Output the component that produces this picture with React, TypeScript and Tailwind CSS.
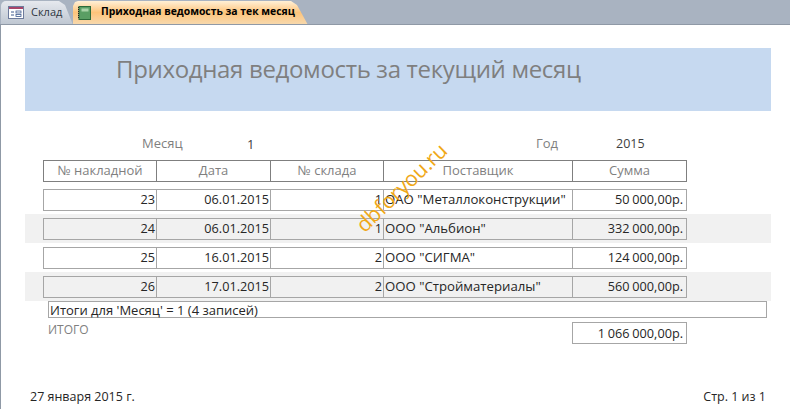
const font = { fontFamily: '"Open Sans", "Noto Sans", sans-serif' };

const cols = ["w-[112px]", "w-[114px]", "w-[113px]", "w-[189px]", "w-[114px]"];
const rows = [
  ["23", "06.01.2015", "1", 'ОАО "Металлоконструкции"', "50 000,00р."],
  ["24", "06.01.2015", "1", 'ООО "Альбион"', "332 000,00р."],
  ["25", "16.01.2015", "2", 'ООО "СИГМА"', "124 000,00р."],
  ["26", "17.01.2015", "2", 'ООО "Стройматериалы"', "560 000,00р."],
];
const head = ["№ накладной", "Дата", "№ склада", "Поставщик", "Сумма"];

function Row({ cells, band }: { cells: string[]; band: boolean }) {
  return (
    <div className={`h-[29px] pl-[18px] flex items-center w-[746px] ${band ? "bg-[#f1f1f1]" : ""}`}>
      <div className="flex h-[22px] w-[644px] border border-[#a6a6a6]">
        {cells.map((c, i) => (
          <div
            key={i}
            className={`${cols[i]} shrink-0 h-full flex items-center leading-none whitespace-nowrap text-[#262626] ${
              i > 0 ? "border-l border-[#a6a6a6]" : ""
            } ${i === 3 ? "justify-start pl-px text-[13.2px]" : "justify-end text-[12.7px]"} ${i === 4 ? "pr-[3px] [word-spacing:-0.5px]" : i === 3 ? "" : "pr-px"}`}
          >
            {c}
          </div>
        ))}
      </div>
    </div>
  );
}

export default function App() {
  return (
    <div className="w-[790px] h-[409px] overflow-hidden bg-white relative" style={font}>
      {/* tab strip */}
      <div className="h-[25px] bg-[#a9b3c1] flex items-end border-b border-[#8f99a6] pl-px">
        <div className="w-[72px] h-[23px] rounded-tl-[5px] [clip-path:polygon(0_0,58px_0,64px_4px,72px_24px,0_24px)] bg-gradient-to-b from-[#e6e9ee] to-[#bfc7d2] flex items-center pl-[7px] gap-[7px]">
          <svg width="16" height="13" viewBox="0 0 16 13" className="shrink-0">
            <rect x="0.5" y="0.5" width="15" height="12" fill="#fff" stroke="#6d7b9c" />
            <rect x="1" y="1" width="14" height="2" fill="#a8456a" />
            <path d="M3 6h3M3 9h3" stroke="#3f5b8f" />
            <rect x="8" y="5" width="5" height="2" fill="#fff" stroke="#3f5b8f" strokeWidth="0.8" />
            <rect x="8" y="8.5" width="5" height="2" fill="#fff" stroke="#3f5b8f" strokeWidth="0.8" />
          </svg>
          <span className="text-[11px] leading-none text-[#2d3640] pb-[2px]">Склад</span>
        </div>
        <div className="w-[235px] h-[23px] [clip-path:polygon(0_5px,2px_1px,5px_0,218px_0,224px_4px,235px_24px,0_24px)] bg-gradient-to-b from-[#fff0d6] via-[#fdc47a] to-[#f7d8ac] flex items-center pl-[5px] gap-[10px]">
          <svg width="13" height="14" viewBox="0 0 13 14" className="shrink-0">
            <rect x="1" y="0.5" width="11.5" height="13" fill="#5a9e64" stroke="#2d6b3a" />
            <rect x="3.5" y="2.5" width="7" height="3" fill="#a9d3a8" />
            <path d="M0.5 1v12" stroke="#222" strokeDasharray="1 1" />
          </svg>
          <span className="text-[10.4px] leading-none font-bold text-black whitespace-nowrap pb-[2px]">Приходная ведомость за тек месяц</span>
        </div>
      </div>

      {/* page */}
      <div className="h-[384px] border-l border-[#8f99a6] pl-[24px] relative">
        <div className="pt-[23px]">
          <div className="h-[63px] w-[746px] bg-[#c6d9f0] pl-[91px] pt-[2px]">
            <span className="text-[24px] tracking-[-0.33px] leading-[38px] text-[#7f7f7f] whitespace-nowrap">Приходная ведомость за текущий месяц</span>
          </div>
        </div>

        <div className="h-[49px] w-[746px] relative flex items-end pb-[8px] text-[13px] leading-[18px]">
          <span className="ml-[117px] w-[105px] text-[#7f7f7f]">Месяц</span>
          <span className="w-[289px] text-[#404040] mb-[-1px]">1</span>
          <span className="w-[80px] text-[#7f7f7f]">Год</span>
          <span className="text-[#404040] text-[12.5px] mb-[-1px]">2015</span>
        </div>

        <div className="pl-[18px]">
          <div className="flex h-[22px] w-[644px] border border-[#7f7f7f]">
            {head.map((h, i) => (
              <div
                key={h}
                className={`${cols[i]} shrink-0 h-full flex items-center justify-center pb-px text-[13px] leading-none text-[#7f7f7f] whitespace-nowrap ${
                  i > 0 ? "border-l border-[#7f7f7f]" : ""
                }`}
              >
                {h}
              </div>
            ))}
          </div>
        </div>

        <div className="pt-[3px] flex flex-col">
          {rows.map((r, i) => (
            <Row key={r[0]} cells={r} band={i % 2 === 1} />
          ))}
        </div>

        <div className="ml-[23px] w-[719px] h-[17px] border border-[#a6a6a6] pl-[1px] pt-[2px] flex items-center text-[13px] leading-none text-[#262626] whitespace-nowrap">
          Итоги для 'Месяц' = 1 (4 записей)
        </div>

        <div className="relative mt-[4px] h-[22px] w-[662px] flex justify-between pl-[23px]">
          <span className="text-[12px] leading-[16px] text-[#7f7f7f]">ИТОГО</span>
          <div className="w-[115px] h-[22px] border border-[#a6a6a6] flex items-center justify-end pr-[3px] text-[12.7px] [word-spacing:-0.5px] leading-none text-[#262626] whitespace-nowrap">
            1 066 000,00р.
          </div>
        </div>

        <div className="mt-[44px] w-[736px] ml-[5px] flex justify-between text-[12.5px] leading-[18px] text-[#262626]">
          <span>27 января 2015 г.</span>
          <span>Стр. 1 из 1</span>
        </div>

        <div className="absolute left-[342px] top-[152px] -rotate-[44deg] origin-center text-[#f0a818] text-[21px] leading-none whitespace-nowrap">
          dbforyou.ru
        </div>
      </div>
    </div>
  );
}
